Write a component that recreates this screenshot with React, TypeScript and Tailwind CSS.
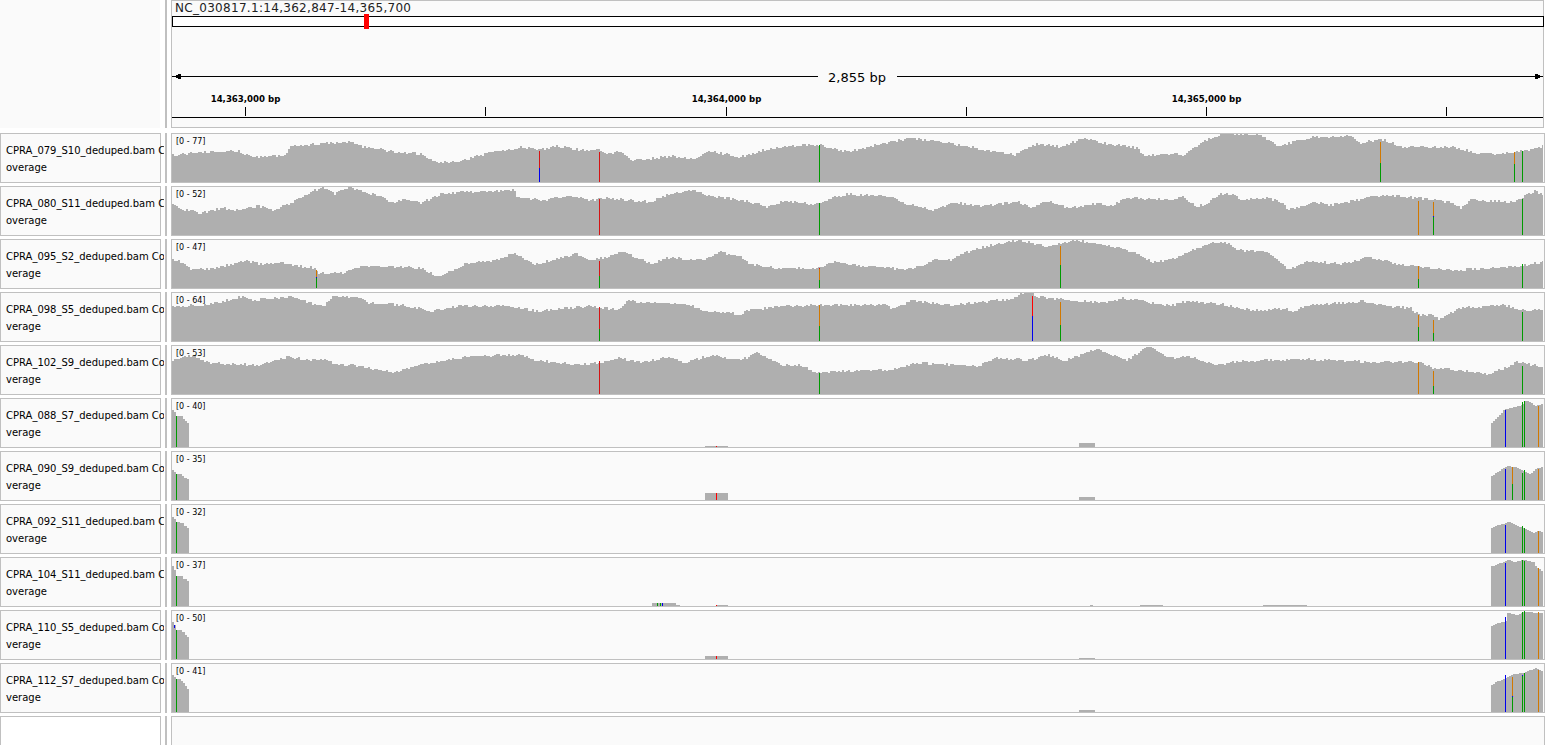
const FONT = 'font-["DejaVu_Sans",sans-serif]';

const COLORS: Record<string, string> = {
  r: '#d41414',
  R: '#ff0000',
  b: '#0000ee',
  g: '#009a00',
  o: '#d17800',
  n: '#afafaf',
};

type Bar = { x: number; s: [string, number][] };
type Track = {
  name: [string, string];
  range: string;
  line?: number[][];
  ends?: number[][];
  right?: number[][];
  blocks?: number[][];
  bars: Bar[];
};

const pairs = (xs: number[], ys: number[]) => xs.map((x, i) => [x, ys[i]]);

// coverage outlines read off the screenshot: [page x, y inside the track]
const t1 = pairs(
  [172, 177, 197, 237, 250, 283, 290, 327, 353, 363, 380, 387, 420, 437, 457, 480, 520, 537, 557, 580, 600, 607, 620, 632, 670, 693, 707, 740, 763, 803, 820, 848, 870, 910, 953, 1013, 1037, 1060, 1083, 1107, 1137, 1143, 1170, 1183, 1200, 1220, 1257, 1277, 1313, 1350, 1360, 1380, 1403, 1453, 1480, 1513, 1543],
  [22, 22, 19, 18, 24, 23, 13, 10, 9, 14, 15, 18, 21, 29, 29, 22, 14, 17, 13, 17, 17, 21, 18, 28, 23, 26, 18, 24, 17, 12, 12, 19, 13, 5, 11, 22, 11, 14, 5, 11, 15, 23, 21, 22, 10, 1, 1, 13, 4, 3, 10, 6, 14, 14, 21, 20, 13],
);
const t2 = pairs(
  [172, 180, 200, 220, 237, 257, 273, 290, 307, 323, 333, 347, 360, 377, 393, 403, 420, 443, 513, 517, 543, 570, 590, 607, 650, 663, 690, 710, 747, 767, 780, 798, 813, 830, 848, 893, 907, 933, 953, 977, 1017, 1030, 1047, 1067, 1097, 1107, 1127, 1170, 1183, 1195, 1203, 1220, 1233, 1240, 1267, 1283, 1287, 1313, 1330, 1383, 1417, 1453, 1460, 1470, 1513, 1533, 1543],
  [17, 23, 27, 22, 24, 20, 24, 17, 7, 1, 8, 1, 4, 10, 17, 12, 17, 7, 4, 12, 14, 10, 14, 12, 16, 10, 4, 10, 15, 21, 16, 16, 19, 12, 8, 11, 18, 24, 16, 20, 16, 21, 15, 22, 17, 21, 12, 14, 11, 20, 19, 8, 9, 14, 12, 17, 24, 16, 19, 9, 12, 17, 23, 14, 16, 5, 9],
);
const t3 = pairs(
  [172, 185, 190, 210, 227, 247, 263, 277, 297, 315, 318, 343, 360, 403, 420, 437, 447, 463, 497, 513, 533, 557, 575, 590, 623, 650, 670, 687, 703, 720, 742, 748, 777, 820, 833, 857, 900, 920, 933, 950, 963, 987, 1020, 1047, 1073, 1117, 1143, 1150, 1170, 1190, 1213, 1227, 1237, 1250, 1267, 1277, 1287, 1310, 1340, 1370, 1397, 1453, 1503, 1543],
  [20, 25, 30, 30, 26, 22, 26, 23, 27, 29, 34, 34, 27, 28, 29, 37, 34, 25, 21, 14, 25, 20, 15, 22, 13, 25, 18, 21, 21, 13, 19, 25, 29, 29, 22, 27, 30, 28, 21, 21, 14, 7, 1, 8, 1, 8, 17, 23, 21, 12, 3, 4, 11, 12, 13, 21, 30, 22, 25, 18, 25, 31, 29, 23],
);
const t4 = pairs(
  [172, 207, 240, 253, 293, 313, 323, 333, 360, 367, 403, 430, 457, 503, 537, 590, 617, 627, 670, 687, 703, 740, 747, 787, 820, 887, 891, 910, 953, 1010, 1023, 1032, 1037, 1100, 1123, 1170, 1187, 1220, 1250, 1287, 1292, 1303, 1363, 1383, 1410, 1418, 1430, 1437, 1460, 1503, 1520, 1543],
  [14, 13, 5, 8, 5, 12, 14, 4, 6, 11, 13, 19, 14, 14, 19, 14, 18, 9, 12, 12, 19, 22, 18, 14, 13, 13, 17, 9, 13, 7, 1, 1, 5, 11, 6, 14, 9, 12, 18, 17, 20, 14, 9, 14, 16, 23, 23, 27, 16, 13, 18, 18],
);
const t5 = pairs(
  [172, 188, 210, 257, 287, 310, 327, 337, 350, 393, 413, 470, 520, 533, 580, 600, 617, 640, 670, 683, 710, 740, 757, 783, 800, 817, 837, 887, 917, 977, 993, 1030, 1047, 1063, 1097, 1127, 1147, 1170, 1187, 1213, 1243, 1303, 1370, 1420, 1433, 1447, 1490, 1517, 1543],
  [15, 10, 18, 20, 12, 15, 15, 20, 20, 27, 21, 11, 10, 15, 20, 17, 13, 17, 12, 18, 10, 15, 8, 20, 20, 28, 26, 25, 18, 21, 13, 15, 10, 16, 4, 15, 1, 13, 11, 20, 16, 14, 17, 17, 23, 24, 29, 17, 22],
);

const tracks: Track[] = [
  {
    name: ['CPRA_079_S10_deduped.bam C', 'overage'],
    range: '[0 - 77]',
    line: t1,
    bars: [
      { x: 539, s: [['r', 18], ['b', 35]] },
      { x: 599, s: [['r', 19]] },
      { x: 819, s: [['g', 12]] },
      { x: 1380, s: [['o', 9], ['g', 30]] },
      { x: 1514, s: [['o', 19], ['g', 31]] },
      { x: 1522, s: [['g', 18]] },
    ],
  },
  {
    name: ['CPRA_080_S11_deduped.bam C', 'overage'],
    range: '[0 - 52]',
    line: t2,
    bars: [
      { x: 599, s: [['r', 13]] },
      { x: 819, s: [['g', 17]] },
      { x: 1418, s: [['o', 15]] },
      { x: 1433, s: [['o', 16], ['b', 30], ['g', 31]] },
      { x: 1522, s: [['g', 13]] },
    ],
  },
  {
    name: ['CPRA_095_S2_deduped.bam Co', 'verage'],
    range: '[0 - 47]',
    line: t3,
    bars: [
      { x: 316, s: [['o', 31], ['b', 38], ['g', 39]] },
      { x: 599, s: [['r', 22], ['g', 37]] },
      { x: 819, s: [['r', 29], ['o', 30], ['g', 41]] },
      { x: 1060, s: [['o', 7], ['g', 26]] },
      { x: 1418, s: [['o', 27], ['g', 40]] },
      { x: 1522, s: [['g', 25]] },
    ],
  },
  {
    name: ['CPRA_098_S5_deduped.bam Co', 'verage'],
    range: '[0 - 64]',
    line: t4,
    bars: [
      { x: 599, s: [['r', 15], ['g', 37]] },
      { x: 819, s: [['o', 13], ['g', 34]] },
      { x: 1032, s: [['R', 4], ['b', 24]] },
      { x: 1060, s: [['o', 10], ['g', 33]] },
      { x: 1418, s: [['o', 23], ['g', 35]] },
      { x: 1433, s: [['o', 28], ['g', 41]] },
      { x: 1522, s: [['g', 20]] },
    ],
  },
  {
    name: ['CPRA_102_S9_deduped.bam Co', 'verage'],
    range: '[0 - 53]',
    line: t5,
    bars: [
      { x: 599, s: [['r', 16]] },
      { x: 819, s: [['g', 28]] },
      { x: 1418, s: [['o', 17]] },
      { x: 1433, s: [['o', 26], ['g', 41]] },
      { x: 1522, s: [['g', 21]] },
    ],
  },
  {
    name: ['CPRA_088_S7_deduped.bam Co', 'verage'],
    range: '[0 - 40]',
    ends: [[172, 12], [174, 14], [176, 18], [183, 21], [185, 23], [187, 25]],
    right: [[1491, 25], [1495, 21], [1499, 17], [1503, 12], [1510, 10], [1522, 7], [1525, 3], [1528, 3], [1535, 8], [1543, 5]],
    blocks: [[705, 728, 48], [1079, 1095, 45]],
    bars: [
      { x: 176, s: [['g', 18]] },
      { x: 716, s: [['R', 48]] },
      { x: 1505, s: [['b', 12]] },
      { x: 1522, s: [['g', 4]] },
      { x: 1524, s: [['g', 3]] },
      { x: 1538, s: [['o', 8]] },
    ],
  },
  {
    name: ['CPRA_090_S9_deduped.bam Co', 'verage'],
    range: '[0 - 35]',
    ends: [[172, 19], [174, 21], [176, 23], [182, 25], [184, 27], [187, 28]],
    right: [[1491, 25], [1500, 19], [1506, 15], [1515, 16], [1520, 19], [1530, 23], [1535, 18], [1543, 15]],
    blocks: [[705, 728, 42], [1079, 1095, 46]],
    bars: [
      { x: 176, s: [['g', 23]] },
      { x: 716, s: [['R', 42]] },
      { x: 1505, s: [['b', 18]] },
      { x: 1512, s: [['o', 16], ['g', 33]] },
      { x: 1522, s: [['g', 22]] },
      { x: 1524, s: [['g', 19]] },
      { x: 1538, s: [['o', 18]] },
    ],
  },
  {
    name: ['CPRA_092_S11_deduped.bam C', 'overage'],
    range: '[0 - 32]',
    ends: [[172, 13], [174, 15], [176, 18], [180, 19], [184, 22], [187, 24]],
    right: [[1491, 24], [1495, 22], [1508, 18], [1513, 20], [1525, 25], [1532, 29], [1537, 27], [1543, 28]],
    bars: [
      { x: 176, s: [['g', 18]] },
      { x: 1505, s: [['b', 21]] },
      { x: 1522, s: [['g', 22]] },
      { x: 1524, s: [['g', 24]] },
      { x: 1538, s: [['o', 27]] },
    ],
  },
  {
    name: ['CPRA_104_S11_deduped.bam C', 'overage'],
    range: '[0 - 37]',
    ends: [[172, 9], [174, 13], [176, 19], [183, 22], [187, 24]],
    right: [[1491, 9], [1495, 8], [1508, 3], [1513, 5], [1523, 3], [1533, 5], [1535, 9], [1543, 15]],
    blocks: [[652, 676, 46], [676, 680, 48], [716, 728, 48], [1090, 1093, 48], [1140, 1163, 48], [1263, 1307, 48]],
    bars: [
      { x: 176, s: [['g', 19]] },
      { x: 657, s: [['g', 46]] },
      { x: 660, s: [['g', 46]] },
      { x: 662, s: [['b', 46]] },
      { x: 716, s: [['R', 48]] },
      { x: 1505, s: [['b', 6]] },
      { x: 1522, s: [['g', 3]] },
      { x: 1524, s: [['g', 4]] },
      { x: 1538, s: [['o', 11]] },
    ],
  },
  {
    name: ['CPRA_110_S5_deduped.bam Co', 'verage'],
    range: '[0 - 50]',
    ends: [[172, 12], [174, 15], [176, 20], [182, 22], [185, 25], [187, 27]],
    right: [[1491, 16], [1495, 14], [1505, 11], [1507, 3], [1517, 5], [1523, 2], [1543, 3]],
    blocks: [[705, 728, 46], [1079, 1095, 48]],
    bars: [
      { x: 174, s: [['b', 15], ['n', 18]] },
      { x: 176, s: [['g', 20]] },
      { x: 716, s: [['R', 46]] },
      { x: 1505, s: [['b', 7]] },
      { x: 1522, s: [['g', 2]] },
      { x: 1524, s: [['g', 1]] },
      { x: 1538, s: [['o', 2]] },
    ],
  },
  {
    name: ['CPRA_112_S7_deduped.bam Co', 'verage'],
    range: '[0 - 41]',
    ends: [[172, 12], [174, 14], [176, 16], [181, 18], [183, 20], [185, 23], [187, 26]],
    right: [[1491, 22], [1495, 19], [1503, 16], [1513, 11], [1523, 10], [1530, 7], [1535, 5], [1543, 9]],
    blocks: [[1079, 1095, 47]],
    bars: [
      { x: 176, s: [['g', 16]] },
      { x: 1505, s: [['b', 12]] },
      { x: 1512, s: [['o', 14], ['b', 33], ['g', 34]] },
      { x: 1522, s: [['b', 12], ['g', 13]] },
      { x: 1524, s: [['g', 10]] },
      { x: 1538, s: [['o', 7]] },
    ],
  },
];

const ticks = [
  { x: 245, label: '14,363,000 bp' },
  { x: 485 },
  { x: 726, label: '14,364,000 bp' },
  { x: 966 },
  { x: 1206, label: '14,365,000 bp' },
  { x: 1446 },
];

function wobble(x: number, seed: number) {
  const v = Math.sin(x * 12.9898 + seed * 78.233) * 43758.5453;
  return Math.round((v - Math.floor(v)) * 2.4 - 1.2);
}

// stair-step outline, like the coverage columns in the picture
function coveragePath(pts: number[][], seed: number, jitter: boolean) {
  let d = `M${pts[0][0]} 49`;
  let i = 0;
  const last = pts[pts.length - 1][0];
  for (let x = pts[0][0]; x < last; x += 2) {
    while (i < pts.length - 2 && pts[i + 1][0] <= x) i++;
    const [x0, y0] = pts[i];
    const [x1, y1] = pts[i + 1];
    const y = y0 + ((y1 - y0) * (x - x0)) / (x1 - x0);
    const top = Math.max(1, Math.round(y) + (jitter ? wobble(x, seed) : 0));
    d += `V${top}H${Math.min(x + 2, last)}`;
  }
  return d + 'V49Z';
}

function endsPath(pts: number[][]) {
  let d = `M${pts[0][0]} 49`;
  pts.forEach((p, i) => {
    const next = i < pts.length - 1 ? pts[i + 1][0] : 189;
    d += `V${p[1]}H${next}`;
  });
  return d + 'V49Z';
}

function Coverage({ track, seed }: { track: Track; seed: number }) {
  return (
    <svg width={1371} height={48} viewBox="172 1 1371 48" shapeRendering="crispEdges" className="block">
      {track.line && <path d={coveragePath(track.line, seed, true)} fill="#afafaf" />}
      {track.ends && <path d={endsPath(track.ends)} fill="#afafaf" />}
      {track.right && <path d={coveragePath(track.right, seed, false)} fill="#afafaf" />}
      {track.blocks?.map((b) => (
        <rect key={b[0]} x={b[0]} y={b[2]} width={b[1] - b[0]} height={49 - b[2]} fill="#afafaf" />
      ))}
      {track.bars.map((bar) =>
        bar.s.map(([c, y], i) => {
          const end = i < bar.s.length - 1 ? bar.s[i + 1][1] : 49;
          return <rect key={`${bar.x}-${i}`} x={bar.x} y={y} width={1} height={end - y} fill={COLORS[c]} />;
        }),
      )}
    </svg>
  );
}

function TrackRow({ track, seed }: { track: Track; seed: number }) {
  return (
    <div className="flex h-[50px] shrink-0">
      <div className="w-[161px] shrink-0 border border-[#c0c0c0] bg-[#fafafa] pl-[5px] pt-[8px] text-[10px] leading-[17px] text-black">
        <div className="w-[158px] overflow-hidden whitespace-nowrap">{track.name[0]}</div>
        <div>{track.name[1]}</div>
      </div>
      <div className="ml-1 mr-1 w-[2px] shrink-0 bg-[#c0c0c0]" />
      <div className="relative w-[1374px] shrink-0 border border-[#c0c0c0] bg-[#fafafa]">
        <Coverage track={track} seed={seed} />
        <span className="absolute left-[4px] top-[2.5px] text-[8px] leading-[10px] text-black">{track.range}</span>
      </div>
    </div>
  );
}

function Ruler() {
  return (
    <svg width={1371} height={100} viewBox="172 27 1371 100" shapeRendering="crispEdges" className="block">
      <path d="M172 76.5H818M897 76.5H1543" stroke="#000" fill="none" />
      <path d="M173 76.5L181 73.5V79.5Z" fill="#000" />
      <path d="M1543 76.5L1535 73.5V79.5Z" fill="#000" />
      <text x={857} y={82} textAnchor="middle" fontSize={13} fill="#000" shapeRendering="auto">
        2,855 bp
      </text>
      {ticks.map((t) => (
        <g key={t.x}>
          <rect x={t.x} y={107} width={1} height={9} fill="#000" />
          {t.label && (
            <text x={t.x + 0.5} y={102} textAnchor="middle" fontSize={8.6} fontWeight={700} fill="#000">
              {t.label}
            </text>
          )}
        </g>
      ))}
      <rect x={172} y={117} width={1371} height={1} fill="#000" />
    </svg>
  );
}

export default function App() {
  return (
    <div className={`h-screen overflow-hidden bg-white ${FONT}`}>
      <div className="flex h-[128px]">
        <div className="w-[160px] shrink-0 bg-[#fafafa]" />
        <div className="ml-[5px] mr-1 w-[2px] shrink-0 bg-[#c0c0c0]" />
        <div className="w-[1373px] shrink-0 border border-[#c0c0c0] bg-[#fafafa]">
          <div className="h-[15px] pl-[3px] text-[12px] leading-[15px] tracking-[0.3px] text-[#222]">
            NC_030817.1:14,362,847-14,365,700
          </div>
          <div className="relative h-[11px] w-[1372px] border border-black bg-white">
            <div className="absolute left-[191px] top-[-3px] h-[15px] w-[5px] bg-[#ff0000]" />
          </div>
          <Ruler />
        </div>
      </div>
      <div className="mt-[5px] flex flex-col gap-[3px]">
        {tracks.map((t, i) => (
          <TrackRow key={t.name[0]} track={t} seed={i + 1} />
        ))}
        <div className="flex h-[50px] shrink-0">
          <div className="w-[161px] shrink-0 border border-[#c0c0c0] bg-white" />
          <div className="ml-1 mr-1 w-[2px] shrink-0 bg-[#c0c0c0]" />
          <div className="w-[1374px] shrink-0 border border-[#c0c0c0] bg-[#fafafa]" />
        </div>
      </div>
    </div>
  );
}
